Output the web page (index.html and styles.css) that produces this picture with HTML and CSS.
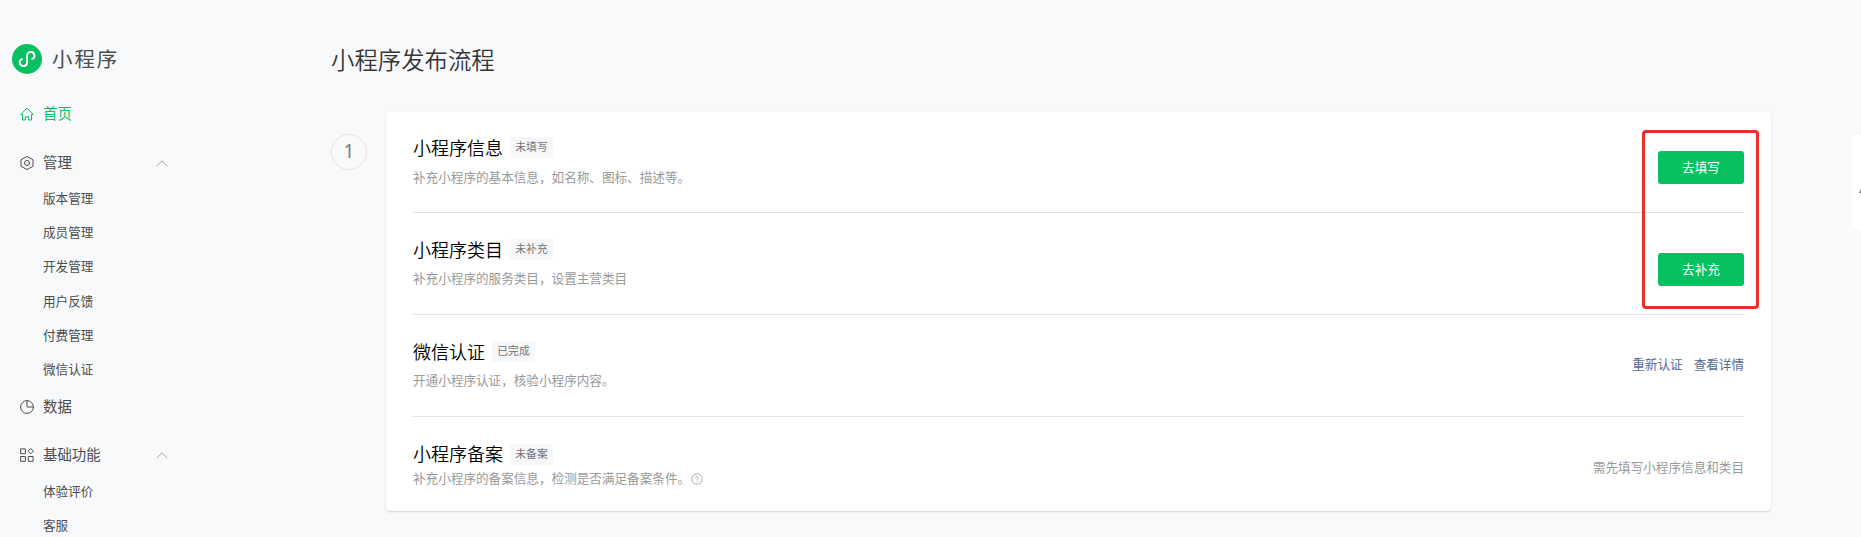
FILE: index.html
```html
<!DOCTYPE html>
<html lang="zh-CN">
<head>
  <meta charset="UTF-8" />
  <title>小程序</title>
  <link rel="stylesheet" href="styles.css">
</head>
<body>
  <div class="page">
    <aside class="sidebar">
      <div class="logo">
        <svg class="logo-icon" viewBox="0 0 30 30">
          <circle cx="15" cy="15" r="15" fill="#07c160" />
          <path d="M10 15.100A3.700 3.600 0 1 0 15.100 18.400V11.500A3.700 3.600 0 1 1 20.200 14.900" fill="none" stroke="#fff" stroke-width="1.9" stroke-linecap="round" />
        </svg>
        <span class="logo-text">小程序</span>
      </div>

      <div class="menu-item active">
        <svg class="menu-icon" viewBox="0 0 14 14">
          <path d="M2.500 7.500H.8L7 1l6.200 6.500H11.500V13H8.700V9.800H5.300V13H2.500z" />
        </svg>
        <span>首页</span>
      </div>

      <div class="menu-item manage">
        <svg class="menu-icon" viewBox="0 0 14 14">
          <path d="M7 .5 13 3.700v6.600L7 13.500 1 10.300V3.700z" />
          <circle cx="7" cy="7" r="2.500" />
        </svg>
        <span>管理</span>
        <svg class="arrow" viewBox="0 0 12 7"><path d="M.5 6.300 6 .8l5.500 5.500" /></svg>
      </div>
      <ul class="sub-menu">
        <li>版本管理</li>
        <li>成员管理</li>
        <li>开发管理</li>
        <li>用户反馈</li>
        <li>付费管理</li>
        <li>微信认证</li>
      </ul>

      <div class="menu-item data">
        <svg class="menu-icon" viewBox="0 0 14 14">
          <circle cx="7" cy="7" r="6.400" />
          <path d="M7 .6V7h6.400" />
        </svg>
        <span>数据</span>
      </div>

      <div class="menu-item basic">
        <svg class="menu-icon" viewBox="0 0 14 14">
          <path d="M.6 .9h4.800v4.800H.6zM.6 8.500h4.800v4.800H.6zM8.300 8.500H13.100v4.800H8.300zM10.700 .5l2.700 2.700-2.700 2.700L8 3.200z" />
        </svg>
        <span>基础功能</span>
        <svg class="arrow" viewBox="0 0 12 7"><path d="M.5 6.300 6 .8l5.500 5.500" /></svg>
      </div>
      <ul class="sub-menu sub-basic">
        <li>体验评价</li>
        <li>客服</li>
      </ul>
    </aside>

    <main class="main">
      <h1 class="title">小程序发布流程</h1>
      <div class="step">
        <div class="step-num">1</div>
        <div class="card">
          <div class="row">
            <div class="info">
              <div class="name">小程序信息<span class="tag">未填写</span></div>
              <p class="desc">补充小程序的基本信息，如名称、图标、描述等。</p>
            </div>
            <button class="btn">去填写</button>
          </div>
          <div class="row">
            <div class="info">
              <div class="name">小程序类目<span class="tag">未补充</span></div>
              <p class="desc">补充小程序的服务类目，设置主营类目</p>
            </div>
            <button class="btn">去补充</button>
          </div>
          <div class="row">
            <div class="info">
              <div class="name">微信认证<span class="tag">已完成</span></div>
              <p class="desc">开通小程序认证，核验小程序内容。</p>
            </div>
            <div class="links"><a>重新认证</a><a>查看详情</a></div>
          </div>
          <div class="row last">
            <div class="info">
              <div class="name">小程序备案<span class="tag">未备案</span></div>
              <p class="desc">补充小程序的备案信息，检测是否满足备案条件。<svg class="help" viewBox="0 0 12 12">
                <circle cx="6" cy="6" r="5.200" />
                <path d="M4.500 4.900a1.500 1.500 0 1 1 2.300 1.200Q6 6.500 6 7.300M6 8.200v.9" />
              </svg></p>
            </div>
            <span class="tip">需先填写小程序信息和类目</span>
          </div>
          <div class="mark"></div>
        </div>
      </div>
    </main>

    <div class="float-bar">
      <svg class="float-icon" viewBox="0 0 2 4"><path d="M0 4 2 0v4z" /></svg>
    </div>
  </div>
</body>
</html>
```
FILE: styles.css
```css
* {
  box-sizing: border-box;
}
body {
  margin: 0;
  height: 537px;
  overflow: hidden;
  background: #f8f9fb;
  color: #4c4d4e;
  font-family: "Noto Sans", "Noto Sans CJK SC", sans-serif;
  font-weight: 400;
}
.page {
  display: flex;
  height: 537px;
  overflow: hidden;
}

/* 左侧菜单 */
.sidebar {
  width: 331px;
  padding-top: 44px;
}
.logo {
  display: flex;
  align-items: center;
  height: 30px;
  margin-bottom: 30px;
  padding-left: 12px;
}
.logo-icon {
  width: 30px;
  height: 30px;
  margin-right: 10px;
}
.logo-text {
  font-size: 20.5px;
  line-height: 30px;
  letter-spacing: 1.9px;
}
.menu-item {
  display: flex;
  align-items: center;
  width: 168px;
  height: 20px;
  padding-left: 20px;
  font-size: 14.4px;
  line-height: 20px;
}
.menu-icon {
  width: 14px;
  height: 14px;
  margin-right: 9px;
  fill: none;
  stroke: #4c4d4e;
}
.active {
  color: #07c160;
}
.active .menu-icon {
  stroke: #07c160;
}
.manage {
  margin-top: 29px;
}
.data {
  margin-top: 10px;
}
.basic {
  margin-top: 28px;
}
.arrow {
  width: 12px;
  height: 7px;
  margin-left: auto;
  fill: none;
  stroke: #a5a6a8;
}
.sub-menu {
  margin: 9px 0 0;
  padding: 0 0 0 43px;
  list-style: none;
  font-size: 12.6px;
}
.sub-menu li {
  height: 34.2px;
  line-height: 34.2px;
}
.sub-basic {
  margin-top: 10px;
}

/* 发布流程 */
.main {
  width: 1440px;
}
.title {
  margin: 44px 0 36px;
  height: 32px;
  line-height: 32px;
  font-size: 23.4px;
  font-weight: 350;
  color: #353637;
}
.step {
  display: flex;
  align-items: flex-start;
}
.step-num {
  width: 36px;
  height: 36px;
  margin: 22px 19px 0 0;
  border: 1px solid #e4e5e7;
  border-radius: 50%;
  text-align: center;
  line-height: 32px;
  font-size: 19px;
  color: #7b7c7e;
}
.card {
  position: relative;
  width: 1385px;
  height: 399px;
  padding: 0 27px;
  border-radius: 4px;
  background: #fff;
  box-shadow: 0 1px 2px rgba(0, 0, 0, 0.15);
}
.row {
  display: flex;
  align-items: center;
  justify-content: space-between;
  height: 102px;
  border-bottom: 1px solid #e3e4e5;
}
.row:first-child {
  height: 101px;
}
.name {
  display: flex;
  align-items: center;
  height: 22px;
  font-size: 18px;
  line-height: 22px;
  color: #000;
  font-weight: 350;
}
.tag {
  width: 43px;
  height: 21px;
  margin-left: 7px;
  border-radius: 2px;
  background: #f6f7f9;
  color: #737476;
  font-size: 10.8px;
  line-height: 19px;
  text-align: center;
  font-weight: 400;
}
.desc {
  display: flex;
  align-items: center;
  margin: 8px 0 0;
  font-size: 12.6px;
  line-height: 20px;
  color: #999a9b;
}
.row:first-child .desc {
  margin-top: 9px;
}
.btn {
  width: 86px;
  height: 33px;
  padding: 0;
  margin-top: 11px;
  border: 0;
  border-radius: 3px;
  background: #07c160;
  color: #fff;
  font: 400 12.6px/33px "Noto Sans", "Noto Sans CJK SC", sans-serif;
}
.links {
  display: flex;
  gap: 11px;
  margin-top: -4px;
  font-size: 12.6px;
  color: #576b95;
}
.tip {
  font-size: 12.6px;
  color: #999a9b;
}
.last {
  height: 94px;
  padding-top: 4px;
  border-bottom: 0;
}
.last .desc {
  margin-top: 4px;
}
.help {
  width: 12px;
  height: 12px;
  margin-left: 1px;
  fill: none;
  stroke: #999a9b;
  stroke-width: 0.8;
}

/* 红框标注 */
.mark {
  position: absolute;
  top: 18px;
  right: 12px;
  width: 117px;
  height: 179px;
  border: 3px solid #e53127;
  border-radius: 4px;
}

.float-bar {
  display: flex;
  align-items: center;
  justify-content: flex-end;
  width: 9px;
  height: 95px;
  margin: 135px 0 0 auto;
  background: #fff;
}
.float-icon {
  width: 2px;
  height: 4px;
  margin-top: 16px;
  fill: #77736d;
}
```
